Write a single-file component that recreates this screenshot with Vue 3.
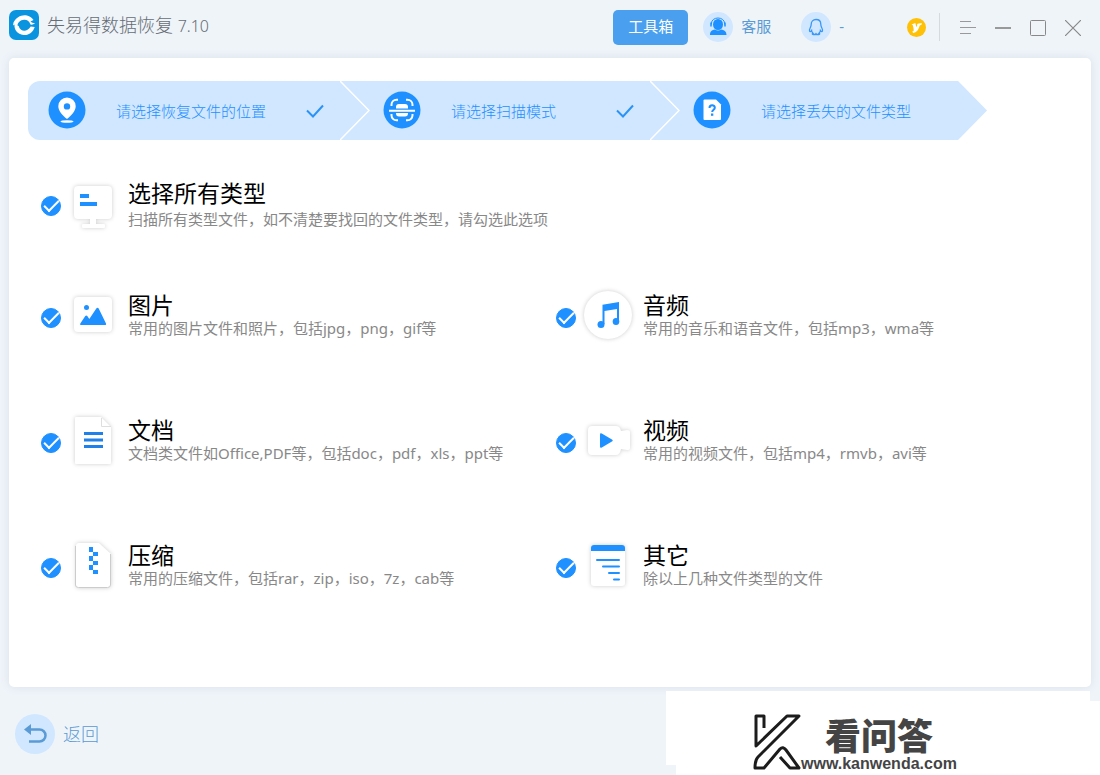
<script setup>
import { reactive } from 'vue'

const all = { id: 'all', title: '选择所有类型', desc: '扫描所有类型文件，如不清楚要找回的文件类型，请勾选此选项' }
const types = [
  { id: 'image', title: '图片', desc: '常用的图片文件和照片，包括jpg，png，gif等' },
  { id: 'audio', title: '音频', desc: '常用的音乐和语音文件，包括mp3，wma等' },
  { id: 'doc', title: '文档', desc: '文档类文件如Office,PDF等，包括doc，pdf，xls，ppt等' },
  { id: 'video', title: '视频', desc: '常用的视频文件，包括mp4，rmvb，avi等' },
  { id: 'zip', title: '压缩', desc: '常用的压缩文件，包括rar，zip，iso，7z，cab等' },
  { id: 'other', title: '其它', desc: '除以上几种文件类型的文件' }
]
const checked = reactive({ all: true, image: true, audio: true, doc: true, video: true, zip: true, other: true })
</script>

<template>
  <div class="window">
    <header class="topbar">
      <div class="brand">
        <svg class="logo" viewBox="0 0 30 30" aria-hidden="true">
          <rect width="30" height="30" rx="7" fill="#0a94e0" />
          <path d="M4.500 12.500C7 7 13 4.200 18 5.500c3 .7 5 2.300 6.500 4.500l-3 1.500c1.300 1 2.500 1.500 4.500 1.500-1.500 1.500-3 2-4.500 1.500C20 10.500 17 9.300 14 10c-3.500.8-5 4-4 7 1.200 3.500 5.500 4.800 8.500 2.700 1.500-1 2.500-2 3.200-3.200l4 .5C24 22.500 19.500 25.500 14.500 25 8.500 24.300 5 20 5.500 14.500L4 15.500z" fill="#fff" />
          <path d="M8.500 15.500c.3-4 4-6 7.500-5-3.500.3-5.500 2.500-5 6" fill="#0a94e0" />
        </svg>
        <h1>失易得数据恢复 <span class="version">7.10</span></h1>
      </div>
      <div class="tools">
        <button class="toolbox" type="button">工具箱</button>
        <button class="link" type="button">
          <svg width="30" height="30" viewBox="0 0 30 30" aria-hidden="true">
            <circle cx="15" cy="15" r="15" fill="#d0e7ff" />
            <ellipse cx="15" cy="12.500" rx="5" ry="5.500" fill="#1e90ff" />
            <path d="M8.500 12.500v-1.500a6.500 5 0 0 1 13 0v1.500" fill="none" stroke="#1e90ff" stroke-width="1" />
            <path d="M8 10.500v4M22 10.500v4" stroke="#1e90ff" stroke-width="1.500" />
            <path d="M7 23c0-4 2-5 5-5.500 1.500 1.200 4.500 1.200 6 0 3 .5 5.500 1.500 5.500 5.500z" fill="#1e90ff" />
          </svg>
          <span>客服</span>
        </button>
        <button class="link" type="button" aria-label="QQ">
          <svg width="30" height="30" viewBox="0 0 30 30" aria-hidden="true">
            <circle cx="15" cy="15" r="15" fill="#d0e7ff" />
            <path d="M15 7.500c-3 0-4.800 2-4.800 4.800 0 2-.5 2.600-1.200 4-.8 1.500-.6 3 .2 3.300.6.200 1-.6 1.400-1.100.1 1.200.7 2 1.400 2.700-1 .3-1 1.300.2 1.300h2.200l.6-.8.6.8h2.200c1.200 0 1.200-1 .2-1.300.7-.7 1.300-1.500 1.400-2.700.4.500.8 1.300 1.400 1.100.8-.3 1-1.800.2-3.300-.7-1.400-1.200-2-1.200-4 0-2.800-1.800-4.800-4.800-4.800z" fill="none" stroke="#3a97f5" stroke-width="1.300" />
          </svg>
          <span>-</span>
        </button>
      </div>
      <div class="controls">
        <button class="coin" type="button" aria-label="会员">
          <svg width="19" height="19" viewBox="0 0 19 19" aria-hidden="true">
            <circle cx="9.500" cy="9.500" r="9.500" fill="#ffc107" />
            <path d="M4.500 6.500l3.800-1.500 1 4c1-1 1-2 .8-3 2-.9 3.500-.8 5-.5-.3 1.700-2 1.500-2.500 2.300-1 4-3 6.700-6.500 7.200l-.8-1.500 1.400-.8c0-2-.4-4-.9-5.500z" fill="#fff" />
          </svg>
        </button>
        <span class="divider"></span>
        <button class="win" type="button" aria-label="菜单">
          <svg width="16" height="16" viewBox="0 0 16 16"><path d="M0 2.500h11M0 8.500h16M0 14.500h11" stroke="#999" /></svg>
        </button>
        <button class="win" type="button" aria-label="最小化">
          <svg width="16" height="16" viewBox="0 0 16 16"><path d="M0 9h16" stroke="#999" stroke-width="2" /></svg>
        </button>
        <button class="win" type="button" aria-label="最大化">
          <svg class="low" width="16" height="16" viewBox="0 0 16 16"><rect x=".5" y=".5" width="15" height="15" rx="1" fill="none" stroke="#888" /></svg>
        </button>
        <button class="win" type="button" aria-label="关闭">
          <svg class="low" width="16" height="16" viewBox="0 0 16 16"><path d="M0 0l16 16M16 0L0 16" stroke="#888" stroke-width="1.200" /></svg>
        </button>
      </div>
    </header>

    <main class="panel">
      <ol class="steps">
        <li class="step">
          <svg class="badge" viewBox="0 0 38 38" aria-hidden="true">
            <circle cx="19" cy="19" r="18.500" fill="#1e90ff" />
            <path fill-rule="evenodd" d="M19 6.500a8.700 8.700 0 0 0-8.700 8.700c0 5 4.500 9.300 8.700 12.800 4.200-3.500 8.700-7.800 8.700-12.800A8.700 8.700 0 0 0 19 6.500zm0 5.700a3.200 3.200 0 1 1 0 6.400 3.200 3.200 0 0 1 0-6.400z" fill="#fff" />
            <ellipse cx="19" cy="30.500" rx="6.500" ry="1.300" fill="#fff" />
          </svg>
          <span class="step-name">请选择恢复文件的位置</span>
          <svg class="tick" viewBox="0 0 18 14" aria-hidden="true"><path d="M1 6.500l6 6L17 1.500" /></svg>
          <svg class="chevron" viewBox="0 0 30 59" aria-hidden="true"><path d="M0 0l29 29.500L0 59" /></svg>
        </li>
        <li class="step">
          <svg class="badge" viewBox="0 0 38 38" aria-hidden="true">
            <circle cx="19" cy="19" r="18.500" fill="#1e90ff" />
            <g fill="none" stroke="#fff" stroke-width="2">
              <path d="M15 8.700h-1.500a5 5 0 0 0-5 5v1.300M23 8.700h1.500a5 5 0 0 1 5 5v1.300M15 29.300h-1.500a5 5 0 0 1-5-5v-1.300M23 29.300h1.500a5 5 0 0 0 5-5v-1.300M6 19.800h26" />
            </g>
            <path d="M13 17.500v-1.500a3 3 0 0 1 3-3h6a3 3 0 0 1 3 3v1.500zM13 22v.500a3 3 0 0 0 3 3h6a3 3 0 0 0 3-3v-.5z" fill="#fff" />
          </svg>
          <span class="step-name">请选择扫描模式</span>
          <svg class="tick" viewBox="0 0 18 14" aria-hidden="true"><path d="M1 6.500l6 6L17 1.500" /></svg>
          <svg class="chevron" viewBox="0 0 30 59" aria-hidden="true"><path d="M0 0l29 29.500L0 59" /></svg>
        </li>
        <li class="step">
          <svg class="badge" viewBox="0 0 38 38" aria-hidden="true">
            <circle cx="19" cy="19" r="18.500" fill="#1e90ff" />
            <path d="M11.500 8.500H23l5 5V28a1 1 0 0 1-1 1H11.500a1 1 0 0 1-1-1V9.500a1 1 0 0 1 1-1z" fill="#fff" />
            <path d="M16.500 17c0-3.500 5.300-3.500 5.300-.3 0 2-2.600 2-2.600 4.300" fill="none" stroke="#1e90ff" stroke-width="2" />
            <rect x="18" y="22.500" width="2.300" height="2.300" fill="#1e90ff" />
          </svg>
          <span class="step-name">请选择丢失的文件类型</span>
        </li>
      </ol>

      <div class="choices">
        <label class="choice choice-all">
          <input v-model="checked.all" class="check" type="checkbox" />
          <svg class="pic" viewBox="0 0 50 56" aria-hidden="true">
            <path class="paper" d="M10 8h30q4 0 4 4v25q0 4-4 4H28v5h8q1 0 1 1v2q0 1-1 1H15q-1 0-1-1v-2q0-1 1-1h7v-5H10q-4 0-4-4V12q0-4 4-4z" />
            <path d="M12 16h9v4h-9zM12 24h17v4H12z" fill="#1e90ff" />
          </svg>
          <span class="words">
            <span class="title">{{ all.title }}</span>
            <span class="desc">{{ all.desc }}</span>
          </span>
        </label>

        <div class="grid">
          <label v-for="t in types" :key="t.id" class="choice">
            <input v-model="checked[t.id]" class="check" type="checkbox" />
            <svg v-if="t.id === 'image'" class="pic" viewBox="0 0 50 56" aria-hidden="true">
              <rect class="paper" x="6" y="7" width="38" height="35" rx="4" />
              <circle cx="18.500" cy="17.500" r="2.500" fill="#1e90ff" />
              <path d="M13 35q-1.500 0-.7-1.500l5-7.500q1-1 2 0l2 3 7-10.500q1.200-1.500 2.400 0L38 33.500q.5 1.500-.7 1.500z" fill="#1e90ff" />
            </svg>
            <svg v-else-if="t.id === 'audio'" class="pic" viewBox="0 0 50 56" aria-hidden="true">
              <circle class="paper" cx="25" cy="25" r="24" />
              <path d="M19.500 14.800L36 12v20h-2V19l-12.500 2v13h-2z" fill="#1e90ff" />
              <ellipse cx="18" cy="34.500" rx="3.500" ry="3.500" fill="#1e90ff" />
              <ellipse cx="33" cy="31.500" rx="3.300" ry="3.500" fill="#1e90ff" />
            </svg>
            <svg v-else-if="t.id === 'doc'" class="pic" viewBox="0 0 50 56" aria-hidden="true">
              <path class="paper" d="M8 2h25l10 10v36q0 1-1 1H8q-1 0-1-1V3q0-1 1-1z" />
              <path d="M33.500 3v8.500H43" fill="none" stroke="#dedede" />
              <path d="M16 18.500h19M16 25h19M16 31.500h19" stroke="#1e80e8" stroke-width="3" />
            </svg>
            <svg v-else-if="t.id === 'video'" class="pic" viewBox="0 0 50 56" aria-hidden="true">
              <path class="paper" d="M9 11h24q4 0 5 5l6-1q3 0 3 2v16q0 2-3 2l-6-1q-1 6-5 6H9q-4 0-4-4V15q0-4 4-4z" />
              <path d="M17 19.500q0-2 1.800-1l10.500 6.200q1 .8 0 1.600l-10.500 6.200q-1.800 1-1.800-1z" fill="#1e90ff" />
            </svg>
            <svg v-else-if="t.id === 'zip'" class="pic" viewBox="0 0 50 56" aria-hidden="true">
              <path class="paper" d="M11 3h20l12 11v30q0 4-4 4H11q-3 0-3-3V6q0-3 3-3z" />
              <path d="M7.500 6v39q0 2.500 3 2.500h29q3 0 3-2.500V14" fill="none" stroke="#ccc" />
              <path d="M21 7h4v5h-4zM25 12h5v4h-5zM21 16h4v5h-4zM25 21h5v4h-5zM21 25h4v5h-4zM25 30h5v4h-5z" fill="#1e90ff" />
            </svg>
            <svg v-else class="pic" viewBox="0 0 50 56" aria-hidden="true">
              <rect class="paper" x="8" y="5" width="34" height="41" rx="3" />
              <path d="M8 11V8q0-3 3-3h28q3 0 3 3v3z" fill="#1e90ff" />
              <path d="M14 20h22M20 26.500h16M26 33h10M31 39.500h5" stroke="#1e90ff" stroke-width="2" stroke-linecap="round" />
            </svg>
            <span class="words">
              <span class="title">{{ t.title }}</span>
              <span class="desc">{{ t.desc }}</span>
            </span>
          </label>
        </div>
      </div>
    </main>

    <footer class="bottom">
      <button class="back" type="button">
        <svg width="40" height="40" viewBox="0 0 40 40" aria-hidden="true">
          <circle cx="20" cy="20" r="20" fill="#d0e7ff" />
          <path d="M14 15.500h10.500a6 6 0 0 1 0 12H14" fill="none" stroke="#5a9bd5" stroke-width="2.500" />
          <path d="M9 15.500l7-5.500v11z" fill="#5a9bd5" />
        </svg>
        <span>返回</span>
      </button>
      <div class="mark">
        <svg class="mark-logo" viewBox="0 0 48 60" aria-hidden="true">
          <path d="M11 16V4H3v30L34 4h12L5 45q-3 3-3 11h9L27 37q3-3 6 1l13 18h-9L27 45" fill="none" stroke="#1c1c1c" stroke-width="3" stroke-linejoin="round" />
        </svg>
        <div class="mark-words">
          <strong>看问答</strong>
          <span>www.kanwenda.com</span>
        </div>
      </div>
    </footer>
  </div>
</template>

<style>
body {
  margin: 0;
  background: #eff4f9;
}
</style>

<style scoped>
.window {
  display: flex;
  flex-direction: column;
  min-height: 100vh;
  background: #eff4f9;
  font-family: "Noto Sans", "Noto Sans CJK SC", sans-serif;
  font-size: 15px;
  overflow: hidden;
}
button {
  display: flex;
  align-items: center;
  justify-content: center;
  margin: 0;
  padding: 0;
  border: 0;
  background: none;
  font: inherit;
  line-height: 20px;
  cursor: pointer;
}
svg {
  display: block;
  flex: none;
}
.topbar {
  display: flex;
  align-items: center;
  height: 54px;
  padding: 0 10px 4px 9px;
}
.brand {
  display: flex;
  align-items: center;
  gap: 8px;
  flex: 1;
  padding-bottom: 4px;
}
.logo {
  width: 30px;
  height: 30px;
}
h1 {
  margin: 0;
  color: #666d75;
  font-size: 18px;
  font-weight: 300;
  line-height: 26px;
  white-space: nowrap;
}
.version {
  font-size: 16px;
}
.tools {
  display: flex;
  align-items: center;
}
.toolbox {
  width: 75px;
  height: 35px;
  margin-right: 15px;
  border-radius: 5px;
  background: #4a9fee;
  color: #fff;
}
.link {
  gap: 8px;
  margin-right: 30px;
  color: #5a9bd5;
}
.toolbox,
.link span {
  padding-bottom: 2px;
}
.controls {
  display: flex;
  align-items: center;
  margin-left: 33px;
}
.divider {
  width: 1px;
  height: 28px;
  margin: 0 10px 0 13px;
  background: #d5dadf;
}
.win {
  width: 35px;
  height: 30px;
}
.low {
  margin-top: 2px;
}
.panel {
  flex: 1;
  margin: 0 9px;
  padding: 23px 19px;
  border-radius: 5px;
  background: #fff;
  box-shadow: 0 0 10px #d8e1ea;
}
.steps {
  display: flex;
  width: fit-content;
  margin: 0;
  padding: 0 76px 0 20px;
  list-style: none;
  background: #d0e7ff;
  border-radius: 12px 0 0 12px;
  clip-path: polygon(0 0, calc(100% - 29px) 0, 100% 50%, calc(100% - 29px) 100%, 0 100%);
}
.step {
  display: flex;
  align-items: center;
  height: 59px;
  color: #1e90ff;
}
.badge {
  width: 38px;
  height: 38px;
  margin: 0 30px 2px 0;
}
.step-name {
  font-weight: 300;
  white-space: nowrap;
}
.tick {
  width: 18px;
  height: 14px;
  margin: 0 16px 0 40px;
  fill: none;
  stroke: #2b93f5;
  stroke-width: 2;
}
.step:nth-child(2) .tick {
  margin-left: 60px;
}
.chevron {
  width: 30px;
  height: 59px;
  margin-right: 13px;
  fill: none;
  stroke: #fff;
  stroke-width: 1.5;
}
.choices {
  padding: 38px 1px 0 13px;
}
.choice {
  display: flex;
  align-items: center;
  height: 56px;
}
.choice-all {
  margin-bottom: 56px;
}
.grid {
  display: grid;
  grid-template-columns: 1fr 1fr;
  row-gap: 69px;
}
.check {
  appearance: none;
  position: relative;
  flex: none;
  width: 20px;
  height: 20px;
  margin: 0 7px 0 0;
  border: 1px solid #1e90ff;
  border-radius: 50%;
}
.check:checked {
  background: #1e90ff;
}
.check:checked::after {
  content: "";
  position: absolute;
  left: 2px;
  top: 3px;
  width: 15px;
  height: 8px;
  border: solid #fff;
  border-width: 0 0 2px 2px;
  box-sizing: border-box;
  transform: rotate(-45deg);
}
.pic {
  width: 50px;
  height: 56px;
  margin-right: 10px;
  overflow: visible;
}
.paper {
  fill: #fff;
  filter: drop-shadow(0 0 2px #ccc);
}
.words {
  display: flex;
  flex-direction: column;
  gap: 1px;
  padding-bottom: 3px;
  white-space: nowrap;
}
.title {
  color: #000;
  font-size: 23px;
  line-height: 22px;
}
.desc {
  color: #888;
  font-weight: 400;
  line-height: 22px;
}
.choice-all .words {
  gap: 4px;
  padding-bottom: 0;
}
.bottom {
  position: relative;
  display: flex;
  align-items: center;
  height: 82px;
  padding: 6px 15px 0;
}
.back {
  gap: 8px;
  color: #5a9bd5;
  font-size: 18px;
  font-weight: 300;
}
.mark {
  position: absolute;
  right: 0;
  bottom: 0;
  display: flex;
  box-sizing: border-box;
  width: 434px;
  height: 84px;
  padding: 21px 0 0 87px;
  background:
    linear-gradient(#fff, #fff) 0 0 / 424px 74px no-repeat,
    linear-gradient(#fff, #fff) 100% 100% / 424px 74px no-repeat;
}
.mark-logo {
  width: 48px;
  height: 60px;
}
.mark-words {
  display: flex;
  flex-direction: column;
  color: #444;
  font-family: "Liberation Sans", "Noto Sans CJK SC", sans-serif;
}
.mark-words strong {
  margin: 8px 0 0 24px;
  font-size: 36px;
  font-weight: 900;
  line-height: 36px;
}
.mark-words span {
  font-size: 16px;
  font-weight: 700;
  line-height: 16px;
}
</style>
